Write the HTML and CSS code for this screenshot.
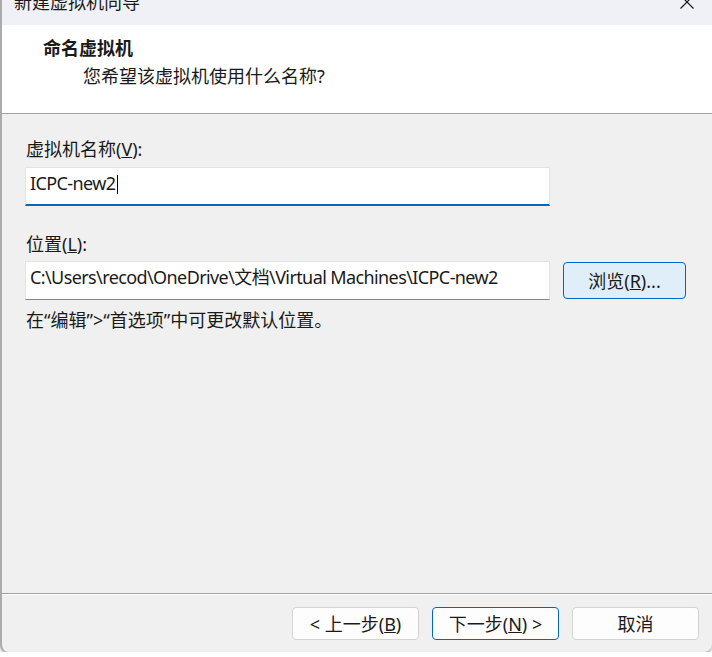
FILE: index.html
```html
<!DOCTYPE html>
<html lang="zh-CN">
<head>
    <meta charset="UTF-8">
    <meta name="viewport" content="width=device-width, initial-scale=1.0">
    <title>新建虚拟机向导</title>
    <link rel="stylesheet" href="styles.css">
</head>
<body>
    <div class="window">
        <div class="titlebar">
            <span class="title">新建虚拟机向导</span>
            <svg class="close" width="16" height="16" viewBox="0 0 16 16">
                <path d="M1.5 1.5 L14.5 14.5 M14.5 1.5 L1.5 14.5" stroke="#1a1a1a" stroke-width="1.2" fill="none"/>
            </svg>
        </div>

        <div class="header">
            <div class="header-title">命名虚拟机</div>
            <div class="header-sub">您希望该虚拟机使用什么名称?</div>
        </div>

        <div class="content">
            <div class="label">虚拟机名称(<u>V</u>):</div>
            <div class="field focused">ICPC-new2<span class="caret"></span></div>

            <div class="label label-loc">位置(<u>L</u>):</div>
            <div class="row">
                <div class="field">C:\Users\recod\OneDrive\文档\Virtual Machines\ICPC-new2</div>
                <button class="btn btn-browse">浏览(<u>R</u>)...</button>
            </div>

            <div class="hint">在“编辑”&gt;“首选项”中可更改默认位置。</div>
        </div>

        <div class="footer">
            <button class="btn">&lt; 上一步(<u>B</u>)</button>
            <button class="btn btn-primary">下一步(<u>N</u>) &gt;</button>
            <button class="btn">取消</button>
        </div>
    </div>
</body>
</html>
```

FILE: styles.css
```css
html, body {
    margin: 0;
    padding: 0;
    background-color: #ffffff;
}

body {
    font-family: "Noto Sans", "Noto Sans CJK SC", sans-serif;
    font-size: 18px;
    color: #1a1a1a;
}

/* dialog frame */
.window {
    box-sizing: border-box;
    width: 712px;
    height: 652px;
    display: flex;
    flex-direction: column;
    background-color: #f0f0f0;
    border-left: 2px solid #ababab;
    border-radius: 0 0 8px 8px;
    box-shadow: 0 2px 3px rgba(0, 0, 0, 0.35);
    overflow: hidden;
}

/* title bar (cut off at the top) */
.titlebar {
    height: 25px;
    display: flex;
    justify-content: space-between;
    align-items: flex-start;
    background-color: #f0f1f6;
    padding: 0 17px 0 12px;
    overflow: hidden;
}

.title {
    line-height: 22px;
    margin-top: -9px;
}

.close {
    margin-top: -6px;
}

/* white header */
.header {
    height: 89px;
    box-sizing: border-box;
    padding: 12px 0 0 41px;
    background-color: #ffffff;
    border-bottom: 1px solid #a0a0a0;
}

.header-title {
    font-weight: bold;
    line-height: 22px;
}

.header-sub {
    line-height: 22px;
    margin: 6px 0 0 40px;
}

/* form area */
.content {
    flex: 1;
    padding: 24px 0 0 23px;
}

.label {
    line-height: 22px;
    margin-left: 1px;
}

.label-loc {
    margin-top: 27px;
}

.field {
    box-sizing: border-box;
    width: 525px;
    height: 39px;
    padding: 4px 4px 0;
    line-height: 22px;
    letter-spacing: -0.6px;
    background-color: #ffffff;
    border: 1px solid #e3e3e3;
    border-bottom-color: #868686;
    white-space: nowrap;
    overflow: hidden;
}

.label + .field {
    margin-top: 7px;
}

.field.focused {
    border-bottom: 2px solid #0067c0;
}

.caret {
    display: inline-block;
    width: 1px;
    height: 19px;
    margin-left: 1px;
    vertical-align: -4px;
    background-color: #000000;
}

.row {
    display: flex;
    align-items: center;
    gap: 13px;
    margin-top: 6px;
}

.hint {
    line-height: 22px;
    margin: 9px 0 0 1px;
}

/* buttons */
.btn {
    box-sizing: border-box;
    width: 127px;
    height: 33px;
    padding: 0;
    font-family: inherit;
    font-size: 18px;
    line-height: 22px;
    color: #1a1a1a;
    background-color: #fdfdfd;
    border: 1px solid #d3d3d3;
    border-radius: 4px;
}

.btn-primary {
    border-color: #0067c0;
}

.btn-browse {
    width: 123px;
    height: 37px;
    background-color: #e0eef9;
    border-color: #0067c0;
}

.footer {
    display: flex;
    justify-content: flex-end;
    gap: 13px;
    padding: 13px 13px 12px 0;
    border-top: 1px solid #a0a0a0;
    box-shadow: inset 0 1px 0 #ffffff;
}
```
